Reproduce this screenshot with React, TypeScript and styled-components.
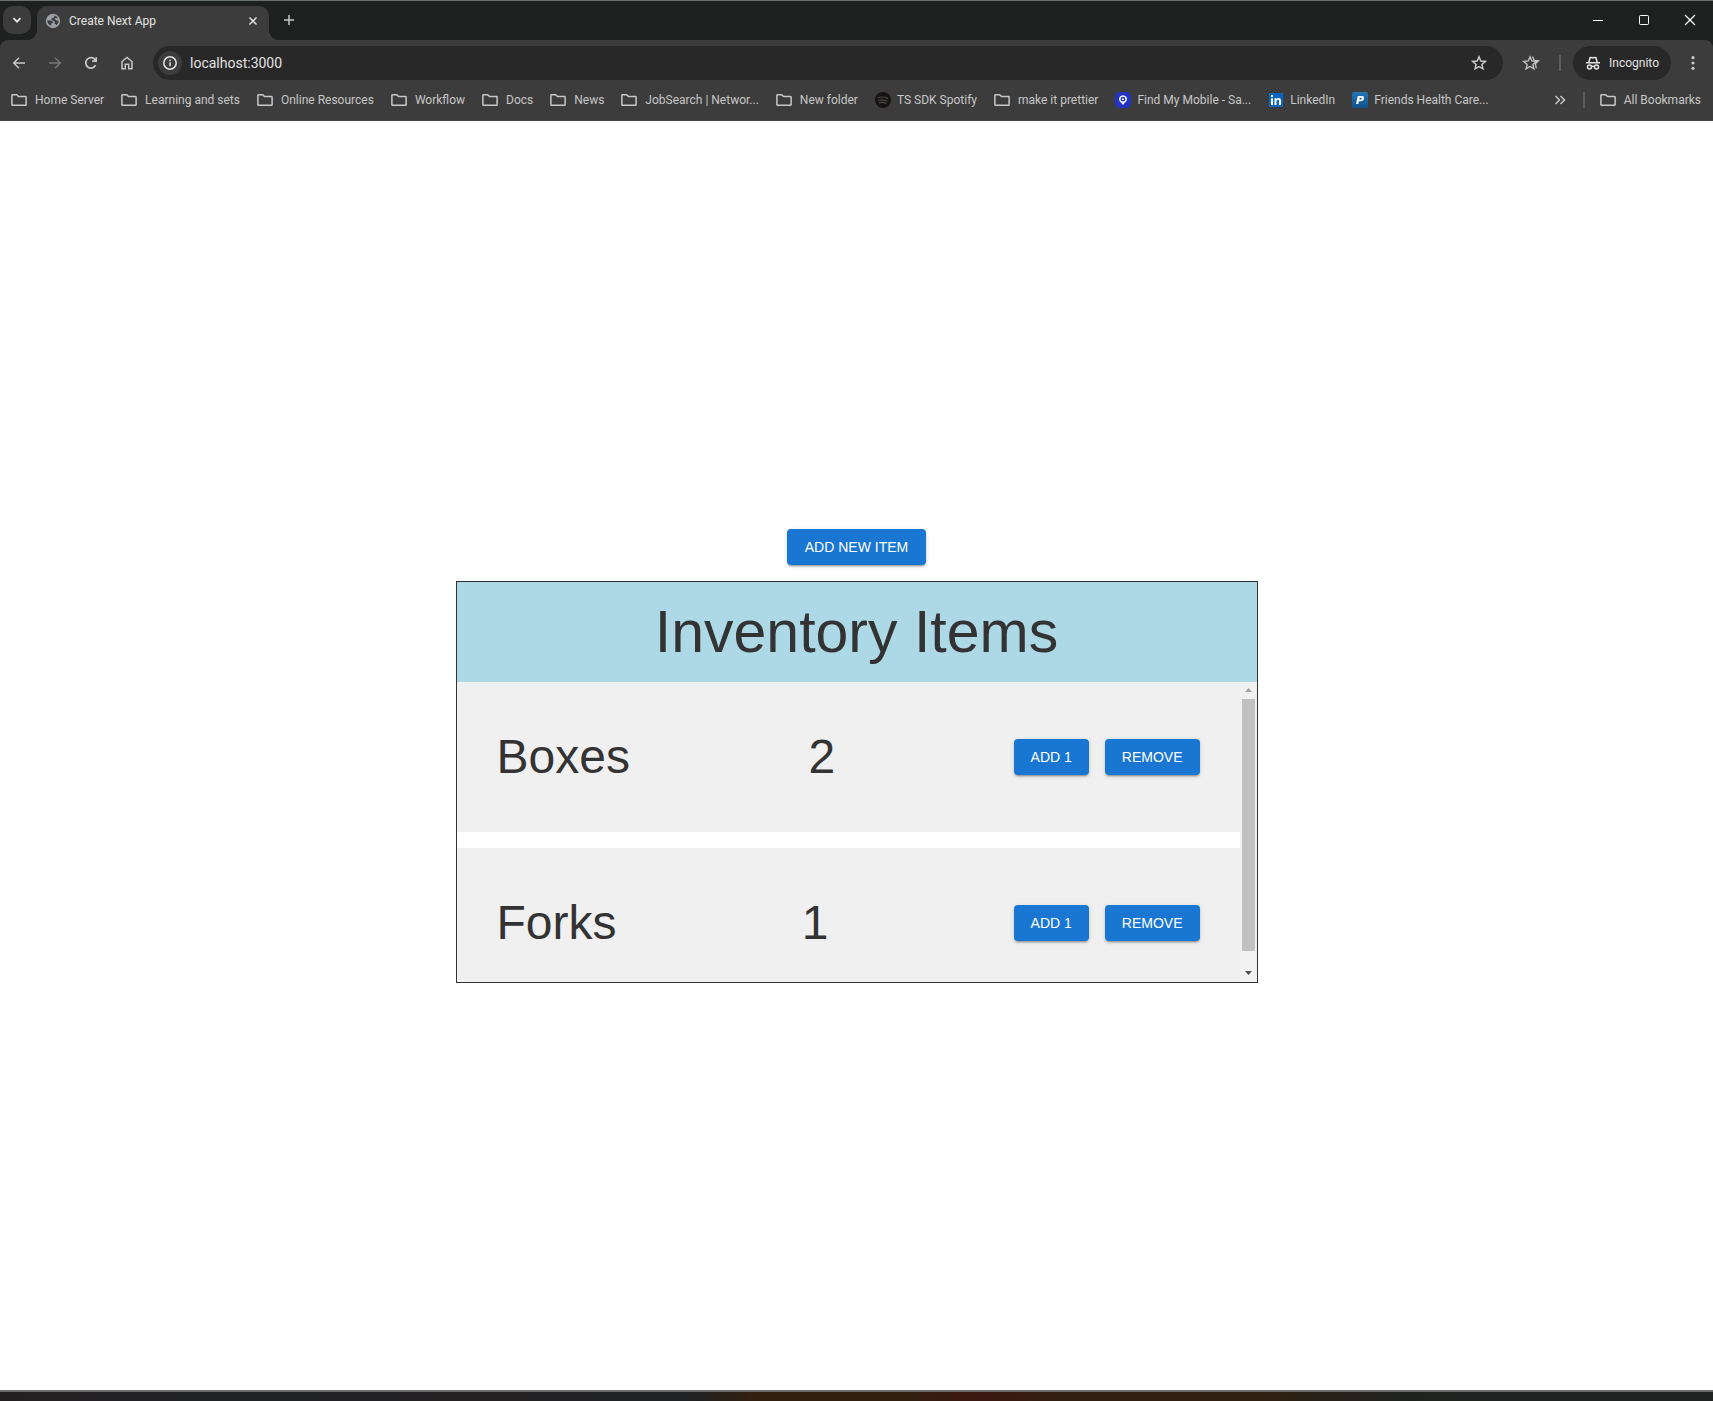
import React from "react";
import styled, { createGlobalStyle } from "styled-components";

const GlobalStyle = createGlobalStyle`
  *, *::before, *::after { box-sizing: border-box; }
  body { margin: 0; background: #fff; }
  button, input { font: inherit; color: inherit; }
  button { border: 0; padding: 0; background: none; cursor: pointer; }
  h1, h2, p, ul { margin: 0; padding: 0; font-weight: 400; }
`;

const Window = styled.div`
  display: flex;
  flex-direction: column;
  min-height: 100vh;
  font-family: Roboto, "Open Sans", sans-serif;
  font-size: 12px;
  color: #c7c7c7;
`;

const Chrome = styled.header`
  background: #1f2020;
  border-top: 1px solid #6b6f6e;
`;

const TabStrip = styled.div`
  display: flex;
  align-items: flex-end;
  height: 39px;
  padding-left: 3px;
`;

const TabSearch = styled.button`
  display: grid;
  place-items: center;
  width: 28px;
  height: 28px;
  margin-bottom: 6px;
  border-radius: 10px;
  background: #3c3c3c;
  color: #e3e3e3;
`;

const Tab = styled.div`
  position: relative;
  display: flex;
  align-items: center;
  gap: 8px;
  width: 232px;
  height: 34px;
  margin-left: 6px;
  padding: 0 8px 5px;
  border-radius: 10px 10px 0 0;
  background: #3c3c3c;
  color: #e3e3e3;

  &::before,
  &::after {
    content: "";
    position: absolute;
    bottom: 0;
    width: 10px;
    height: 10px;
  }
  &::before {
    right: 100%;
    background: radial-gradient(circle at 0 0, transparent 10px, #3c3c3c 10px);
  }
  &::after {
    left: 100%;
    background: radial-gradient(circle at 100% 0, transparent 10px, #3c3c3c 10px);
  }
`;

const TabTitle = styled.span`
  flex: 1;
`;

const IconButton = styled.button<{ $size: number; $color?: string }>`
  display: grid;
  place-items: center;
  flex: none;
  width: ${(p) => p.$size}px;
  height: ${(p) => p.$size}px;
  border-radius: 50%;
  color: ${(p) => p.$color ?? "#c7c7c7"};
`;

const NewTab = styled(IconButton)`
  margin: 0 0 6px 6px;
`;

const WindowControls = styled.div`
  display: flex;
  height: 38px;
  align-self: flex-start;
  margin-left: auto;
`;

const WindowControl = styled.button`
  display: grid;
  place-items: center;
  width: 46px;
  color: #fff;
`;

const Toolbar = styled.div`
  display: flex;
  align-items: center;
  height: 46px;
  padding: 0 10px 0 1px;
  border-radius: 8px 8px 0 0;
  background: #3c3c3c;
`;

const NavButtons = styled.nav`
  display: flex;
  margin-right: 8px;
`;

const AddressBar = styled.div`
  display: flex;
  flex: 1;
  align-items: center;
  height: 34px;
  padding: 0 10px 0 5px;
  border-radius: 17px;
  background: #282828;
`;

const SiteInfo = styled(IconButton)`
  background: #3c3c3c;
  color: #e3e3e3;
`;

const AddressInput = styled.input`
  flex: 1;
  min-width: 0;
  padding: 0 8px;
  border: 0;
  outline: 0;
  background: transparent;
  color: #e3e3e3;
  font-size: 14px;
`;

const Divider = styled.span`
  width: 2px;
  height: 16px;
  flex: none;
  background: #5c5c5c;
`;

const ToolbarActions = styled.div`
  display: flex;
  align-items: center;
  gap: 12px;
  margin-left: 12px;
`;

const Incognito = styled.button`
  display: flex;
  align-items: center;
  gap: 8px;
  height: 34px;
  padding: 0 12px;
  border-radius: 17px;
  background: #282828;
  color: #e3e3e3;
`;

const BookmarkBar = styled.nav`
  display: flex;
  align-items: center;
  height: 35px;
  padding: 0 12px 6px 11px;
  border-bottom: 1px solid #474747;
  background: #3c3c3c;
`;

const BookmarkList = styled.ul`
  display: flex;
  flex: 1;
  gap: 17px;
  list-style: none;
`;

const BookmarkLink = styled.a<{ $favicon?: boolean }>`
  display: flex;
  align-items: center;
  gap: ${(p) => (p.$favicon ? 6 : 8)}px;
  line-height: 16px;
  white-space: nowrap;
  color: inherit;
  text-decoration: none;
`;

const BookmarkEnd = styled.div`
  display: flex;
  align-items: center;
  gap: 15px;
`;

const Page = styled.main`
  display: flex;
  flex: 1;
  flex-direction: column;
  align-items: center;
  justify-content: center;
  gap: 16px;
  padding: 16px;
  background: #fff;
  color: #333;
  font-family: "Liberation Sans", Arial, sans-serif;
`;

const ActionButton = styled.button<{ $wide?: boolean }>`
  min-width: 64px;
  padding: 6px ${(p) => (p.$wide ? 18 : 17)}px;
  border-radius: 4px;
  background: #1976d2;
  box-shadow: 0 3px 1px -2px rgba(0, 0, 0, 0.2), 0 2px 2px rgba(0, 0, 0, 0.14),
    0 1px 5px rgba(0, 0, 0, 0.12);
  color: #fff;
  font-size: 14px;
  font-weight: 500;
  line-height: 24px;
  text-transform: uppercase;
`;

const Panel = styled.section`
  width: 100%;
  max-width: 802px;
  border: 1px solid #333;
`;

const PanelHeader = styled.header`
  display: flex;
  align-items: center;
  justify-content: center;
  height: 100px;
  background: #add8e6;
`;

const PanelTitle = styled.h2`
  font-size: 59px;
  line-height: 72px;
`;

const ListArea = styled.div`
  display: flex;
  height: 300px;
`;

const ItemList = styled.ul`
  display: flex;
  flex: 1;
  flex-direction: column;
  gap: 16px;
  overflow: hidden;
  list-style: none;
`;

const Item = styled.li`
  display: flex;
  flex: none;
  align-items: center;
  justify-content: space-between;
  height: 150px;
  padding: 0 40px;
  background: #f0f0f0;
`;

const ItemText = styled.p`
  font-size: 48px;
  line-height: 56px;
`;

const ItemActions = styled.div`
  display: flex;
  gap: 16px;
`;

const ScrollBar = styled.div`
  display: flex;
  flex-direction: column;
  width: 17px;
  padding: 0 2px;
  background: #f1f1f1;
`;

const ScrollArrow = styled.button`
  display: grid;
  place-items: center;
  width: 13px;
  height: 17px;
`;

const ScrollTrack = styled.div`
  flex: 1;
`;

const ScrollThumb = styled.div`
  height: 95%;
  background: #c1c1c1;
`;

const Taskbar = styled.footer`
  height: 11px;
  border-top: 2px solid #6a6a6a;
  background: linear-gradient(
    90deg,
    #231f20 0%,
    #1f2124 14%,
    #232021 28%,
    #1e2124 40%,
    #33200f 44%,
    #33200f 53%,
    #3b1812 57%,
    #33200f 62%,
    #2f2013 74%,
    #1e221f 82%,
    #202222 100%
  );
`;

const Glyph = ({ d, size = 16, width = 1.5 }: { d: string; size?: number; width?: number }) => (
  <svg width={size} height={size} viewBox="0 0 16 16" fill="none" stroke="currentColor" strokeWidth={width} aria-hidden="true">
    <path d={d} />
  </svg>
);

const STAR = "M8 1.800 9.800 6l4.500.4-3.400 3 1 4.400L8 11.500l-3.900 2.300 1-4.400-3.400-3L6.200 6z";

const FolderIcon = () => <Glyph d="M.9 12.700V3.300q0-.6.6-.6h4.200l1.800 1.800h7q.6 0 .6.6v7.600q0 .6-.6.6h-13q-.6 0-.6-.6z" />;

const SpotifyIcon = () => (
  <svg width="16" height="16" viewBox="0 0 16 16" fill="none" aria-hidden="true">
    <circle cx="8" cy="8" r="8" fill="#191414" />
    <path d="M3.300 5.500q5-1.300 9.400.9M3.800 8.200q4.300-1.100 8 .8M4.200 10.700q3.600-.8 6.600.8" stroke="#4a4747" strokeWidth="1.200" strokeLinecap="round" />
  </svg>
);

const FindIcon = () => (
  <svg width="16" height="16" viewBox="0 0 16 16" aria-hidden="true">
    <rect width="16" height="16" rx="5" fill="#2233c4" />
    <path d="M6.300 10.800A4 4 0 1 1 9.700 10.800L8 13z" fill="#fff" />
    <circle cx="8" cy="7.200" r="2.400" fill="#2233c4" />
    <circle cx="8" cy="7.200" r="1" fill="#fff" />
  </svg>
);

const LinkedInIcon = () => (
  <svg width="16" height="16" viewBox="0 0 16 16" aria-hidden="true">
    <rect x="1" y="1" width="14" height="14" fill="#0a66c2" />
    <path d="M3 6.200h2V13H3zM3 3h2v2H3zM6.500 6.200h1.900v1c1-1.700 4.600-1.600 4.600 1.500V13h-2V9.300c0-2-2.500-1.800-2.500 0V13h-2z" fill="#fff" />
  </svg>
);

const PracticeIcon = () => (
  <svg width="16" height="16" viewBox="0 0 16 16" aria-hidden="true">
    <defs>
      <linearGradient id="practice" x2="0" y2="1">
        <stop stopColor="#2375b5" />
        <stop offset="1" stopColor="#0e518c" />
      </linearGradient>
    </defs>
    <rect width="16" height="16" rx="2" fill="url(#practice)" />
    <path d="M5.800 4h4q2.800.2 2.200 2.700-.6 2.500-3.500 2.500H6.900L6.300 12H4zM7.700 5.800l-.4 1.700h1.400q1 0 1.200-.9.100-.8-.8-.8z" fill="#fff" fillRule="evenodd" />
  </svg>
);

const GlobeIcon = () => (
  <svg width="16" height="16" viewBox="0 0 16 16" aria-hidden="true">
    <circle cx="8" cy="8" r="7.200" fill="#9aa0a6" />
    <path d="M2.200 7.500h3.500q2 0 2 1.800v1H6.200v2.500q-3.600-1.200-4-5.300zM9.500 2.400q2.400.6 3.500 2.800L10.500 5 9 6.500h1.500q1 0 1 1.200h2.200q0 3-2.300 4.600-.2-1.500-1.700-1.500V8.500L7 7.200q-1.200-.5-.5-1.700L9 4.500z" fill="#3c3c3c" />
  </svg>
);

const IncognitoIcon = () => (
  <svg width="16" height="16" viewBox="0 0 16 16" fill="none" stroke="currentColor" strokeWidth="1.500" aria-hidden="true">
    <path d="M1 7.800h14M3.800 7.500 5 2.700q2.500-.5 3 .2.500-.7 3-.2l1.200 4.800M6.500 11.700q1.500-.9 3 0" />
    <circle cx="4.500" cy="12" r="2" />
    <circle cx="11.500" cy="12" r="2" />
  </svg>
);

const bookmarks: { label: string; icon?: React.ReactNode }[] = [
  { label: "Home Server" },
  { label: "Learning and sets" },
  { label: "Online Resources" },
  { label: "Workflow" },
  { label: "Docs" },
  { label: "News" },
  { label: "JobSearch | Networ..." },
  { label: "New folder" },
  { label: "TS SDK Spotify", icon: <SpotifyIcon /> },
  { label: "make it prettier" },
  { label: "Find My Mobile - Sa...", icon: <FindIcon /> },
  { label: "LinkedIn", icon: <LinkedInIcon /> },
  { label: "Friends Health Care...", icon: <PracticeIcon /> },
];

const items = [
  { name: "Boxes", count: 2 },
  { name: "Forks", count: 1 },
];

export default function App() {
  return (
    <Window>
      <GlobalStyle />
      <Chrome>
        <TabStrip>
          <TabSearch aria-label="Search tabs">
            <Glyph d="M4.500 6.200 8 9.700l3.500-3.500" width={1.8} />
          </TabSearch>
          <Tab>
            <GlobeIcon />
            <TabTitle>Create Next App</TabTitle>
            <IconButton $size={16} $color="#e3e3e3" aria-label="Close tab">
              <Glyph d="m4.500 4.500 7 7m0-7-7 7" />
            </IconButton>
          </Tab>
          <NewTab $size={28} aria-label="New tab">
            <Glyph d="M8 3v10M3 8h10" />
          </NewTab>
          <WindowControls>
            <WindowControl aria-label="Minimize">
              <Glyph d="M3 8.500h10" width={1} />
            </WindowControl>
            <WindowControl aria-label="Maximize">
              <Glyph d="M4.500 3.500h7q1 0 1 1v7q0 1-1 1h-7q-1 0-1-1v-7q0-1 1-1z" width={1} />
            </WindowControl>
            <WindowControl aria-label="Close">
              <Glyph d="m3 3 10 10M13 3 3 13" width={1.2} />
            </WindowControl>
          </WindowControls>
        </TabStrip>
        <Toolbar>
          <NavButtons>
            <IconButton $size={36} aria-label="Back">
              <Glyph d="M14 8H2.800M8 2.700 2.700 8 8 13.300" />
            </IconButton>
            <IconButton $size={36} $color="#757575" aria-label="Forward">
              <Glyph d="M2 8h11.200M8 2.700 13.300 8 8 13.300" />
            </IconButton>
            <IconButton $size={36} aria-label="Reload">
              <Glyph d="M12.600 10.200A5.200 5.200 0 1 1 12.300 5M13.200 2.200v4h-4" width={1.7} />
            </IconButton>
            <IconButton $size={36} aria-label="Home">
              <Glyph d="M3 13.700V6.500l5-4 5 4v7.200H9.700V9.300H6.300v4.400z" />
            </IconButton>
          </NavButtons>
          <AddressBar>
            <SiteInfo $size={24} aria-label="Site information">
              <Glyph d="M8 1.800a6.200 6.200 0 1 1 0 12.400A6.200 6.200 0 1 1 8 1.800zM8 7.200v4M8 4.800v1.500" />
            </SiteInfo>
            <AddressInput aria-label="Address" defaultValue="localhost:3000" />
            <IconButton $size={28} aria-label="Bookmark this page">
              <Glyph d={STAR} />
            </IconButton>
          </AddressBar>
          <ToolbarActions>
            <IconButton $size={32} aria-label="Starred extension">
              <svg width="18" height="16" viewBox="0 0 18 16" fill="none" stroke="currentColor" strokeWidth="1.300" aria-hidden="true">
                <path d={STAR} />
                <path d="m10.500 1.600 1.700 3.700 4.300.5-3.100 3 .9 4.600" />
              </svg>
            </IconButton>
            <Divider />
            <Incognito>
              <IncognitoIcon />
              Incognito
            </Incognito>
            <IconButton $size={20} aria-label="Menu">
              <svg width="16" height="16" viewBox="0 0 16 16" fill="currentColor" aria-hidden="true">
                <circle cx="8" cy="2.700" r="1.600" />
                <circle cx="8" cy="8" r="1.600" />
                <circle cx="8" cy="13.300" r="1.600" />
              </svg>
            </IconButton>
          </ToolbarActions>
        </Toolbar>
        <BookmarkBar aria-label="Bookmarks">
          <BookmarkList>
            {bookmarks.map((b) => (
              <li key={b.label}>
                <BookmarkLink href="#" $favicon={Boolean(b.icon)}>
                  {b.icon ?? <FolderIcon />}
                  {b.label}
                </BookmarkLink>
              </li>
            ))}
          </BookmarkList>
          <BookmarkEnd>
            <IconButton $size={16} aria-label="More bookmarks">
              <Glyph d="m3.500 4 4 4-4 4M8.500 4l4 4-4 4" />
            </IconButton>
            <Divider />
            <BookmarkLink href="#">
              <FolderIcon />
              All Bookmarks
            </BookmarkLink>
          </BookmarkEnd>
        </BookmarkBar>
      </Chrome>
      <Page>
        <ActionButton $wide>Add New Item</ActionButton>
        <Panel>
          <PanelHeader>
            <PanelTitle>Inventory Items</PanelTitle>
          </PanelHeader>
          <ListArea>
            <ItemList>
              {items.map((item) => (
                <Item key={item.name}>
                  <ItemText>{item.name}</ItemText>
                  <ItemText>{item.count}</ItemText>
                  <ItemActions>
                    <ActionButton>Add 1</ActionButton>
                    <ActionButton>Remove</ActionButton>
                  </ItemActions>
                </Item>
              ))}
            </ItemList>
            <ScrollBar>
              <ScrollArrow aria-label="Scroll up">
                <svg width="7" height="4" viewBox="0 0 7 4" fill="#a3a3a3" aria-hidden="true">
                  <path d="M3.500 0 7 4H0z" />
                </svg>
              </ScrollArrow>
              <ScrollTrack>
                <ScrollThumb />
              </ScrollTrack>
              <ScrollArrow aria-label="Scroll down">
                <svg width="7" height="4" viewBox="0 0 7 4" fill="#505050" aria-hidden="true">
                  <path d="M3.500 4 7 0H0z" />
                </svg>
              </ScrollArrow>
            </ScrollBar>
          </ListArea>
        </Panel>
      </Page>
      <Taskbar />
    </Window>
  );
}
